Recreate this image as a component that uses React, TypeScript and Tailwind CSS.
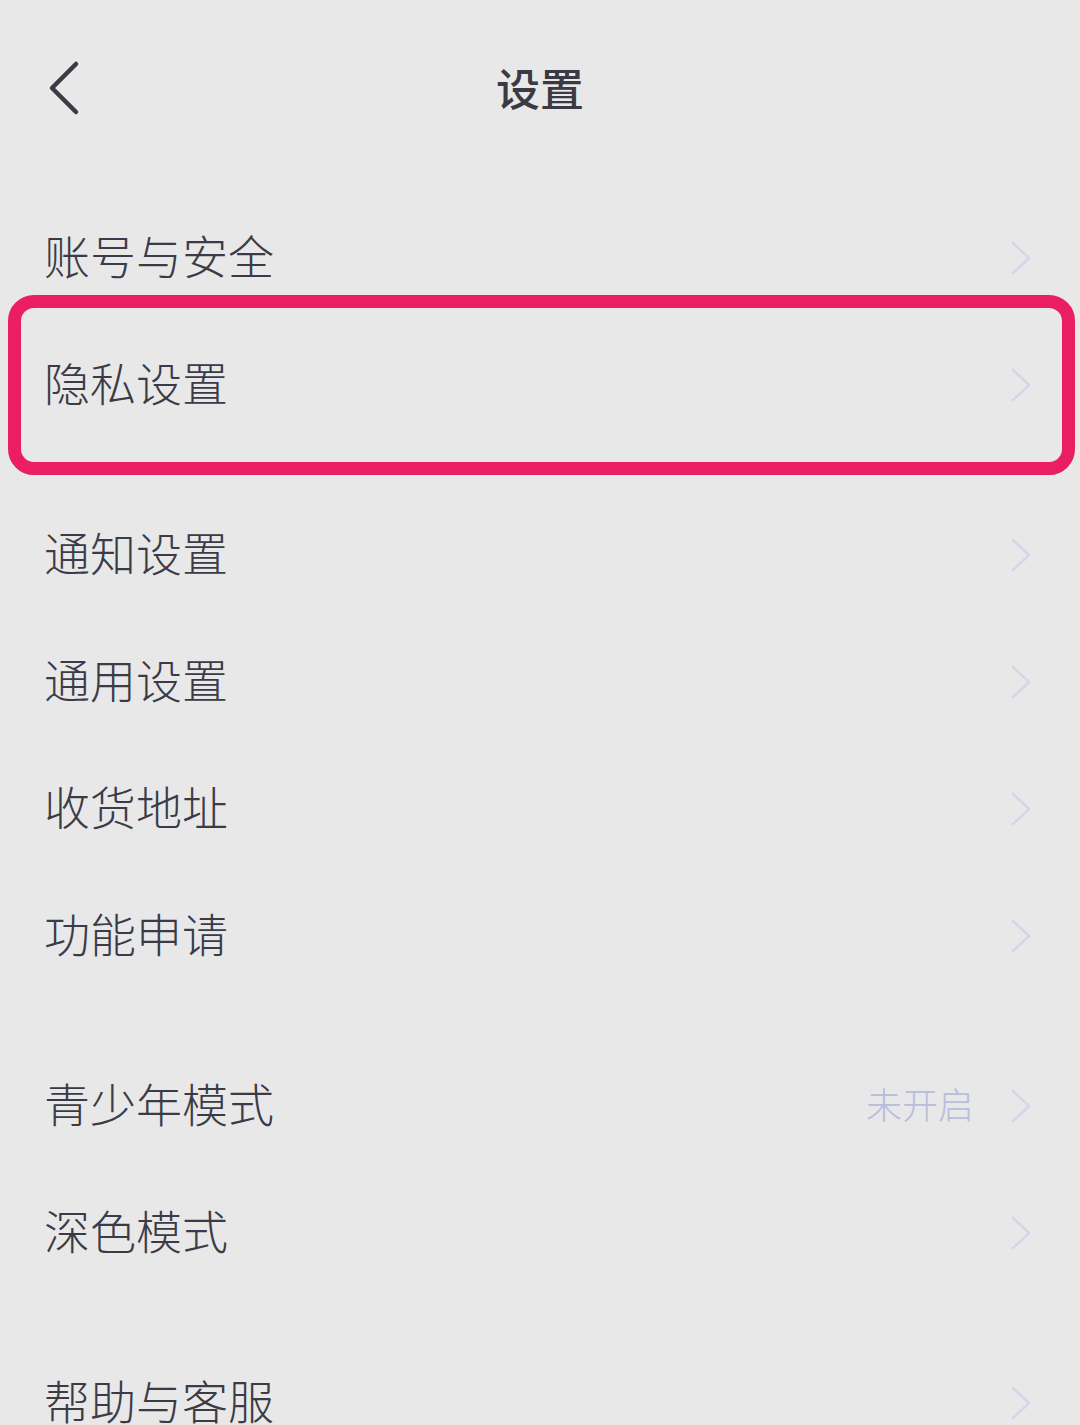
import React from "react";

type Item = { label: string; value?: string; highlight?: boolean };

const groups: Item[][] = [
    [{ label: "账号与安全" }, { label: "隐私设置", highlight: true }],
    [{ label: "通知设置" }, { label: "通用设置" }, { label: "收货地址" }, { label: "功能申请" }],
    [{ label: "青少年模式", value: "未开启" }, { label: "深色模式" }],
    [{ label: "帮助与客服" }],
];

const font = { fontFamily: '"Noto Sans CJK SC", "Noto Sans", sans-serif' };

function Chevron() {
    return (
        <svg width="22" height="36" viewBox="0 0 22 36" fill="none" className="shrink-0">
            <path
                d="M3 3 L19 18 L3 33"
                stroke="#d3d7e8"
                strokeWidth="2.6"
                strokeLinecap="round"
                strokeLinejoin="round"
            />
        </svg>
    );
}

function Row({ item }: { item: Item }) {
    return (
        <div className="relative h-[127px] flex items-center justify-between pl-[44px] pr-[48px]">
            <span className="text-[46px] leading-none font-light text-[#3b3b47] pb-[8px]">{item.label}</span>
            <div className="flex items-center gap-[36px]">
                {item.value && (
                    <span className="text-[36px] leading-none font-light text-[#b9bddb] pb-[6px]">{item.value}</span>
                )}
                <Chevron />
            </div>
            {item.highlight && (
                <div className="absolute left-[8px] right-[5px] top-[-26px] bottom-[-27px] border-[13px] border-[#e91e63] rounded-[26px] pointer-events-none" />
            )}
        </div>
    );
}

export default function App() {
    return (
        <div className="w-[1080px] h-[1425px] overflow-hidden bg-[#e8e8e8]" style={font}>
            <div className="relative h-[180px] flex items-center justify-center">
                <div className="absolute left-[46px] top-[60px]">
                    <svg width="36" height="56" viewBox="0 0 36 56" fill="none">
                        <path
                            d="M30 4 L6 28 L30 52"
                            stroke="#3a3a44"
                            strokeWidth="4.5"
                            strokeLinecap="round"
                            strokeLinejoin="round"
                        />
                    </svg>
                </div>
                <h1 className="text-[44px] font-medium leading-none text-[#3a3a44] pb-[6px]">设置</h1>
            </div>
            <div className="pt-[14px] flex flex-col gap-[43px]">
                {groups.map((group, i) => (
                    <div key={i} className="flex flex-col">
                        {group.map((item) => (
                            <Row key={item.label} item={item} />
                        ))}
                    </div>
                ))}
            </div>
        </div>
    );
}
